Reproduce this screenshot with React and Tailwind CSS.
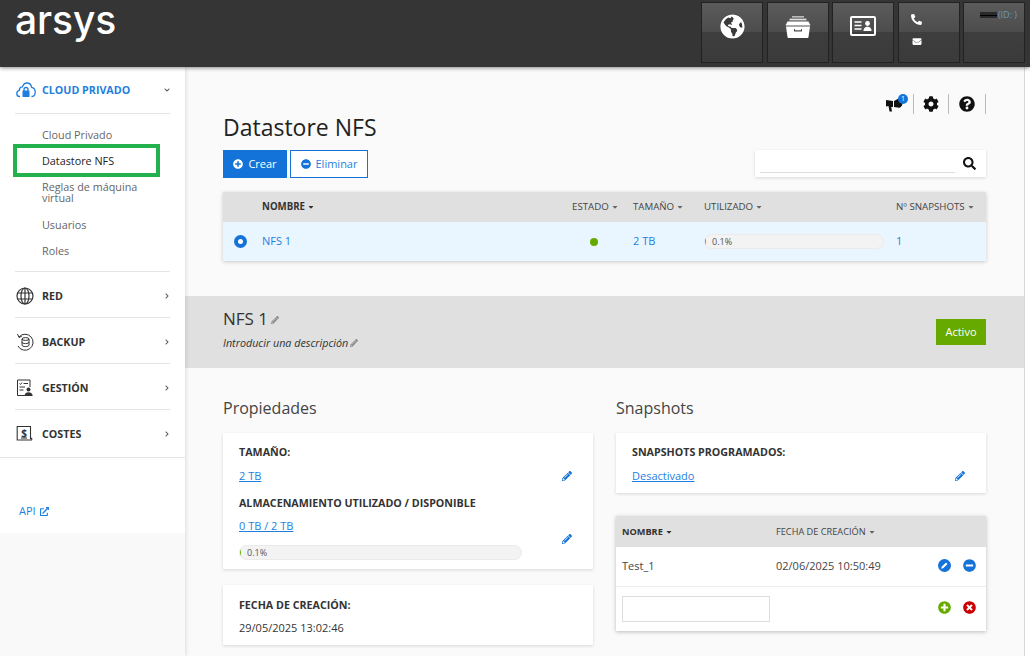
import React from "react";
import { FaCog, FaQuestionCircle, FaSearch, FaPlusCircle, FaMinusCircle, FaPencilAlt, FaTimesCircle, FaGlobeAmericas, FaPhone, FaEnvelope, FaChevronRight, FaChevronDown, FaExternalLinkAlt, FaCaretDown } from "react-icons/fa";

const HeadBtn = ({ children, className = "" }) => (
  <div className={"relative w-[62px] h-[61px] border border-[#222] bg-[linear-gradient(#5b5b5b_0%,#4c4c4c_50%,#3e3e3e_50%,#3a3a3a_100%)] " + className}>{children}</div>
);

const Caret = ({ c = "text-[#666]" }) => <FaCaretDown className={"inline-block w-[8px] h-[8px] ml-[2px] " + c} />;

const CloudIcon = () => (
  <svg width="20" height="16" viewBox="0 0 20 16" fill="none" stroke="#1e7fe0" strokeWidth="1.3">
    <path d="M4 14.5 H3.5 C1.8 14.5 .8 13 .8 11.4 C.8 9.7 2 8.6 3.4 8.4 C3.5 5.6 5 4.8 6.4 4.9 C7.3 2.4 9 1 10.8 1 C13.5 1 15.3 3 15.5 5.3 C17.6 5.6 19.2 7.6 19.2 10 C19.2 12.6 17.8 14.5 16 14.5 H15.5" />
    <path d="M8 9 V7.5 a2 2 0 0 1 4 0 V9" />
    <rect x="6.5" y="8.5" width="7" height="6.5" rx=".5" fill="#1e7fe0" stroke="none" />
  </svg>
);
const GlobeIcon = () => (
  <svg width="18" height="18" viewBox="0 0 18 18" fill="none" stroke="#333" strokeWidth="1.2">
    <circle cx="9" cy="9" r="8" />
    <ellipse cx="9" cy="9" rx="4" ry="8" />
    <path d="M1.6 6 H16.4 M1.6 12 H16.4 M9 1 V17" />
  </svg>
);
const BackupIcon = () => (
  <svg width="18" height="18" viewBox="0 0 18 18" fill="none" stroke="#333" strokeWidth="1">
    <path d="M3 4 A8 8 0 1 1 2 13" />
    <path d="M1.5 1 L3 4.5 L6 3" />
    <ellipse cx="9.5" cy="6" rx="3.5" ry="1.4" />
    <path d="M6 6 V12 C6 13 7.5 13.6 9.5 13.6 C11.5 13.6 13 13 13 12 V6 M6 9 C6 10 7.5 10.6 9.5 10.6 C11.5 10.6 13 10 13 9" />
  </svg>
);
const GestionIcon = () => (
  <svg width="18" height="18" viewBox="0 0 18 18" fill="none" stroke="#333" strokeWidth="1">
    <path d="M9 16.5 H1.5 V1 H14 V8" />
    <path d="M3.5 4.5 L4.5 5.5 L6 3.5 M7.5 4.5 H12 M3.5 8 H9 M3.5 11 H7.5" />
    <circle cx="12.5" cy="10.5" r="2" fill="#333" stroke="none" />
    <path d="M8.5 17 C8.7 14 10.5 13.2 12.5 13.2 C14.5 13.2 16.4 14 16.7 17 Z" fill="#333" stroke="none" />
  </svg>
);
const CostesIcon = () => (
  <svg width="18" height="18" viewBox="0 0 18 18" fill="none" stroke="#333" strokeWidth="1.1">
    <path d="M2.5 15 H1.2 V1.5 H14.5 V14" />
    <path d="M2.5 15 H15.5 a1.3 1.3 0 0 0 0 -1.8 H14.5" />
    <text x="8" y="11.5" fontSize="10" fontWeight="700" fill="#333" stroke="none" textAnchor="middle" fontFamily="'Open Sans',sans-serif">$</text>
    <path d="M5 13 H11" />
  </svg>
);

const DrawerIcon = () => (
  <svg width="26" height="22" viewBox="0 0 26 22" fill="#fff">
    <rect x="7" y="0" width="12" height="1.6" fill="#bbb" />
    <rect x="4.5" y="2.6" width="17" height="1.8" fill="#ddd" />
    <path d="M2.5 5.5 H23.5 L25.5 9.5 H.5 Z" />
    <path d="M1 10.5 H25 L23.5 21 a1 1 0 0 1 -1 1 H3.5 a1 1 0 0 1 -1 -1 Z M9 13 V15.5 H17 V13 H16 V14.3 H10 V13 Z" fillRule="evenodd" />
  </svg>
);
const CardIcon = () => (
  <svg width="26" height="20" viewBox="0 0 26 20" fill="none">
    <rect x="1" y="1" width="24" height="18" rx="1" stroke="#fff" strokeWidth="2" />
    <path d="M4.5 6 H11.5 M4.5 9.5 H11.5 M4.5 13 H11.5" stroke="#fff" strokeWidth="1.6" />
    <circle cx="17.5" cy="7.5" r="2.4" fill="#fff" />
    <path d="M13.5 15 C13.5 11.8 15.5 10.8 17.5 10.8 C19.5 10.8 21.5 11.8 21.5 15 Z" fill="#fff" />
  </svg>
);
const PencilCircle = () => (
  <svg width="13" height="13" viewBox="0 0 13 13">
    <circle cx="6.5" cy="6.5" r="6.5" fill="#1373d8" />
    <path d="M3.2 9.8 L3.7 7.8 L8 3.5 L9.5 5 L5.2 9.3 Z" fill="#fff" />
  </svg>
);
const Megaphone = () => (
  <svg width="17" height="15" viewBox="0 0 17 15" fill="#111">
    <path d="M0 3 L7 4 V10 L5.2 10 L6 14.5 H3.5 L2.5 9 L0 9.5 Z" />
    <path d="M8 4 L13 1.2 C15.5 1.5 16.8 4 16.5 6.5 C16.2 9 14.5 10.8 13 10.8 L8 10 Z" />
  </svg>
);

const Header = () => (
  <header className="relative z-20 h-[67px] shrink-0 bg-[#353535] shadow-[0_1px_4px_rgba(0,0,0,0.45)] flex justify-between pl-[15px] pr-[5px]">
    <div className="font-['Inter',sans-serif] text-white text-[39px] leading-[38px] mt-[1px] font-medium tracking-[-0.1px]">arsys</div>
    <div className="flex gap-[3.5px] pt-[2px]">
      <HeadBtn className="flex justify-center pt-[11px]">
        <div className="w-[25px] h-[25px] rounded-full bg-[#3a3a3a] flex items-center justify-center"><FaGlobeAmericas className="w-[25px] h-[25px] text-white" /></div>
      </HeadBtn>
      <HeadBtn className="flex justify-center pt-[13px]"><DrawerIcon /></HeadBtn>
      <HeadBtn className="flex justify-center pt-[13px]"><CardIcon /></HeadBtn>
      <HeadBtn className="flex flex-col pl-[12px] pt-[11px] gap-[12px]">
        <FaPhone className="w-[11px] h-[11px] text-white scale-x-[-1]" />
        <FaEnvelope className="w-[12px] h-[9px] text-white" />
      </HeadBtn>
      <HeadBtn className="flex justify-end items-start pt-[6px] pr-[7px] gap-[1px]">
        <div className="w-[17px] h-[6px] mt-[3px] bg-[#2a2a2a] flex items-center"><div className="h-[1px] w-full bg-black" /></div>
        <span className="text-[9px] leading-[12px] text-[#6f97b8]">(ID: )</span>
      </HeadBtn>
    </div>
  </header>
);

const SectionHead = ({ icon, label, chevron = "right", active, border = true, className = "h-[46px] pt-[3px]" }) => (
  <div className={"flex items-center " + className + (border ? " border-b border-[#e4e4e4]" : "")}>
    <div className="w-[27px] pl-[1px] flex items-center shrink-0">{icon}</div>
    <span className={"flex-1 text-[10.7px] font-bold " + (active ? "text-[#1e7fe0]" : "text-[#333]")}>{label}</span>
    {chevron === "right" ? <FaChevronRight className="w-[6px] h-[6px] text-[#555]" /> : <FaChevronDown className="w-[6px] h-[6px] text-[#555]" />}
  </div>
);

const SubItem = ({ children, active }) => (
  <div className={"relative pl-[27px] py-[7px] text-[10.8px] leading-[12px] " + (active ? "text-[#222] font-medium" : "text-[#666]")}>
    {children}
    {active && <div className="absolute left-[-2px] top-[-4px] w-[147px] h-[33px] border-[4px] border-[#22b14c]" />}
  </div>
);

const Sidebar = () => (
  <aside className="relative z-10 w-[185px] shrink-0 shadow-[1px_0_4px_rgba(0,0,0,0.12)] bg-[#f9f9f9]">
    <div className="bg-white h-[466px]">
      <div className="px-[15px] h-[391px] border-b border-[#e4e4e4]">
        <SectionHead icon={<CloudIcon />} label="CLOUD PRIVADO" chevron="down" active className="h-[47px]" />
        <div className="pt-[8px] pb-[7px] border-b border-[#e4e4e4]">
          <SubItem>Cloud Privado</SubItem>
          <SubItem active>Datastore NFS</SubItem>
          <div className="pl-[27px] pt-[7px] pb-[9px] text-[10.8px] leading-[11px] text-[#666] w-[125px]">Reglas de máquina virtual</div>
          <SubItem>Usuarios</SubItem>
          <SubItem>Roles</SubItem>
        </div>
        <SectionHead icon={<GlobeIcon />} label="RED" />
        <SectionHead icon={<BackupIcon />} label="BACKUP" />
        <SectionHead icon={<GestionIcon />} label="GESTIÓN" />
        <SectionHead icon={<CostesIcon />} label="COSTES" border={false} className="h-[47px] pt-[1px]" />
      </div>
      <div className="pl-[19px] pt-[45px] flex items-center gap-[4px] text-[11px] leading-[16px] text-[#1e7fe0]">
        API <FaExternalLinkAlt className="w-[9px] h-[9px]" />
      </div>
    </div>
  </aside>
);

const Bar = ({ w }) => (
  <div className={"h-[15px] rounded-full bg-[#f3f3f3] border border-[#ebebeb] overflow-hidden flex items-center " + w}>
    <div className="w-[1px] h-full bg-[#66aa00]" />
    <span className="ml-[6px] text-[9px] leading-none text-[#555]">0.1%</span>
  </div>
);

const Card = ({ children, className = "" }) => (
  <div className={"bg-white shadow-[0_1px_3px_rgba(0,0,0,0.14)] " + className}>{children}</div>
);

const Label = ({ children }) => <div className="text-[10.7px] leading-[16px] font-bold text-[#333]">{children}</div>;
const Lnk = ({ children }) => <a className="text-[11px] leading-[16px] text-[#1e7fe0] underline block">{children}</a>;
const Pencil = () => <FaPencilAlt className="w-[10px] h-[10px] text-[#1373d8]" />;

const Main = () => (
  <main className="flex-1 bg-[#fafafa] text-[#333] min-w-0">
    <div className="px-[38px] pt-[27px]">
      <div className="flex justify-end items-center h-[20px]">
        <div className="relative pr-[10px] border-r border-[#bbb] h-[20px] flex items-center">
          <Megaphone />
          <span className="absolute left-[12px] top-0 w-[10px] h-[10px] rounded-full bg-[#1373d8] text-white text-[7px] leading-[10px] text-center">1</span>
        </div>
        <div className="px-[9px] border-r border-[#bbb] h-[20px] flex items-center"><FaCog className="w-[16px] h-[16px] text-[#111]" /></div>
        <div className="px-[10px] border-r border-[#bbb] h-[20px] flex items-center"><FaQuestionCircle className="w-[16px] h-[16px] text-[#111]" /></div>
      </div>
      <h1 className="-mt-[1px] text-[23px] leading-[28px] text-[#222] font-normal">Datastore NFS</h1>
      <div className="mt-[9px] flex justify-between items-start">
        <div className="flex gap-[3px]">
          <button className="h-[28px] w-[64px] bg-[#1373d8] text-white text-[11px] flex items-center justify-center gap-[5px]"><FaPlusCircle className="w-[10px] h-[10px]" />Crear</button>
          <button className="h-[28px] w-[78px] bg-white border border-[#1373d8] text-[#1e7fe0] text-[11px] flex items-center justify-center gap-[5px]"><FaMinusCircle className="w-[10px] h-[10px] text-[#1373d8]" />Eliminar</button>
        </div>
        <Card className="w-[231px] h-[27px] flex items-start px-[5px]">
          <div className="w-[195px] h-[23px] border-b border-[#ddd]" />
          <FaSearch className="w-[13px] h-[13px] text-[#111] ml-[8px] mt-[7px]" />
        </Card>
      </div>
      <Card className="mt-[14px] shadow-[0_1px_4px_rgba(0,0,0,0.2)]">
        <div className="h-[30px] bg-[#e0e0e0] grid grid-cols-[39px_310px_61px_71px_192px_90px] items-center text-[9.7px] text-[#444]">
          <span />
          <span className="font-bold text-[#333]">NOMBRE<Caret c="text-[#333]" /></span>
          <span>ESTADO<Caret /></span>
          <span>TAMAÑO<Caret /></span>
          <span>UTILIZADO<Caret /></span>
          <span className="whitespace-nowrap">Nº SNAPSHOTS<Caret /></span>
        </div>
        <div className="h-[39px] bg-[#e9f6ff] grid grid-cols-[39px_310px_61px_71px_192px_90px] items-center text-[11px] text-[#1e7fe0]">
          <span className="pl-[11px]"><span className="block w-[13px] h-[13px] rounded-full border-[4px] border-[#1373d8] bg-white" /></span>
          <span>NFS 1</span>
          <span className="pl-[18px]"><span className="block w-[8px] h-[8px] rounded-full bg-[#66aa00]" /></span>
          <span>2 TB</span>
          <Bar w="w-[180px]" />
          <span>1</span>
        </div>
      </Card>
    </div>
    <section className="mt-[35px] h-[72px] bg-[#e0e0e0] px-[38px] flex justify-between items-center">
      <div className="-mt-[8px]">
        <div className="flex items-center gap-[3px] text-[17px] leading-[24px] text-[#333]">NFS 1<FaPencilAlt className="w-[8px] h-[8px] text-[#888] mt-[3px]" /></div>
        <div className="flex items-center gap-[2px] mt-[5px] text-[10.75px] leading-[14px] italic text-[#333]">Introducir una descripción<FaPencilAlt className="w-[8px] h-[8px] text-[#888]" /></div>
      </div>
      <div className="w-[50px] h-[26px] bg-[#66aa00] text-white text-[11px] flex items-center justify-center">Activo</div>
    </section>
    <div className="px-[38px] pt-[28px] grid grid-cols-[370px_370px] gap-x-[23px]">
      <div>
        <h2 className="text-[16px] leading-[24px] font-normal text-[#444]">Propiedades</h2>
        <Card className="mt-[13px] h-[136px] pl-[16px] pr-[15px] pt-[11px] flex justify-between">
          <div className="w-[284px]">
            <Label>TAMAÑO:</Label>
            <div className="mt-[8px]"><Lnk>2 TB</Lnk></div>
            <div className="mt-[11px]"><Label>ALMACENAMIENTO UTILIZADO / DISPONIBLE</Label></div>
            <div className="mt-[7px]"><Lnk>0 TB / 2 TB</Lnk></div>
            <div className="mt-[11px]"><Bar w="w-[283px]" /></div>
          </div>
          <div className="flex flex-col items-end pr-[6px] pt-[27px] gap-[53px]"><Pencil /><Pencil /></div>
        </Card>
        <Card className="mt-[16px] h-[60px] pl-[16px] pr-[15px] pt-[12px]">
          <Label>FECHA DE CREACIÓN:</Label>
          <div className="mt-[7px] text-[11px] leading-[16px]">29/05/2025 13:02:46</div>
        </Card>
      </div>
      <div>
        <h2 className="text-[16px] leading-[24px] font-normal text-[#444]">Snapshots</h2>
        <Card className="mt-[13px] h-[60px] pl-[16px] pr-[15px] pt-[11px]">
          <Label>SNAPSHOTS PROGRAMADOS:</Label>
          <div className="mt-[8px] flex justify-between items-center pr-[6px]"><Lnk>Desactivado</Lnk><Pencil /></div>
        </Card>
        <Card className="mt-[23px] shadow-[0_1px_4px_rgba(0,0,0,0.25)]">
          <div className="h-[31px] bg-[#e0e0e0] grid grid-cols-[154px_1fr] items-center pl-[6px] text-[9.2px] text-[#444]">
            <span className="font-bold text-[#333]">NOMBRE<Caret c="text-[#333]" /></span>
            <span>FECHA DE CREACIÓN<Caret /></span>
          </div>
          <div className="h-[40px] border-b border-[#eee] grid grid-cols-[154px_162px_1fr] items-center pl-[6px] text-[11px] text-[#444]">
            <span>Test_1</span>
            <span>02/06/2025 10:50:49</span>
            <span className="flex gap-[12px] -mt-[2px]"><PencilCircle /><FaMinusCircle className="w-[13px] h-[13px] text-[#1373d8]" /></span>
          </div>
          <div className="h-[44px] grid grid-cols-[316px_1fr] items-center pl-[6px]">
            <div className="w-[148px] h-[26px] -mt-[1px] border border-[#ddd] bg-white" />
            <span className="flex gap-[12px] -mt-[3px]"><FaPlusCircle className="w-[13px] h-[13px] text-[#66aa00]" /><FaTimesCircle className="w-[13px] h-[13px] text-[#cc0000]" /></span>
          </div>
        </Card>
      </div>
    </div>
  </main>
);

export default function App() {
  return (
    <div className="w-[1030px] h-[656px] overflow-hidden flex flex-col bg-white font-['Open_Sans',sans-serif]">
      <Header />
      <div className="flex flex-1 min-h-0">
        <Sidebar />
        <Main />
        <div className="w-[6px] shrink-0 bg-white border-l border-[#d8d8d8]" />
      </div>
    </div>
  );
}
